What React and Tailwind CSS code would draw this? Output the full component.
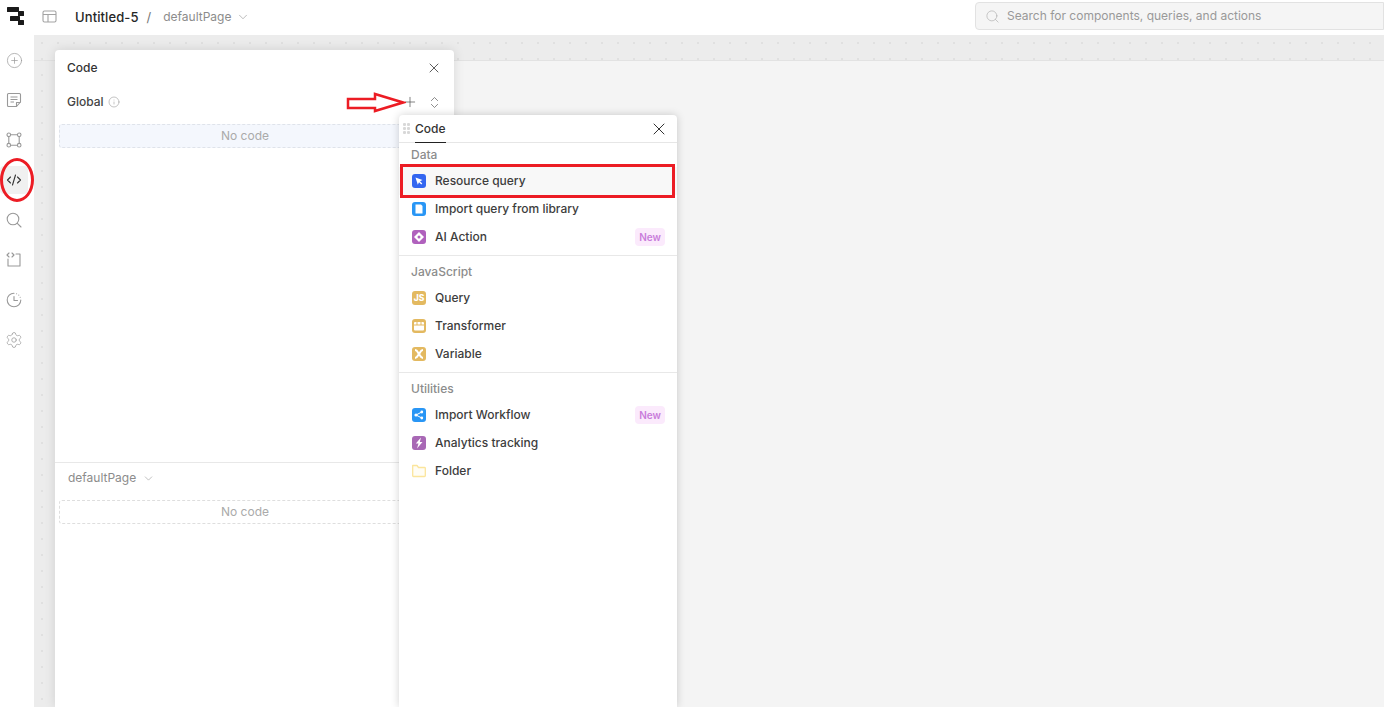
import React from "react";
import { Plus, ChevronDown, ChevronsUpDown, X, Search, Info, CirclePlus, Settings } from "lucide-react";

const Logo = () => (
  <svg width="18" height="19" viewBox="0 0 18 19" fill="#1a1a1a">
    <rect x="0" y="0" width="12" height="5" rx="0.5" />
    <rect x="11" y="4" width="6" height="5" rx="0.5" />
    <rect x="3" y="9" width="10" height="5" rx="0.5" />
    <rect x="11" y="13" width="6" height="5" rx="0.5" />
  </svg>
);

const Rail = ({ active, children }) => (
  <div className={`w-[28px] h-[28px] flex items-center justify-center rounded ${active ? "bg-[#f0f0f0] text-[#333]" : "text-[#999]"}`}>{children}</div>
);

const S = ({ children }) => (
  <svg width="16" height="16" viewBox="0 0 16 16" fill="none" stroke="currentColor" strokeWidth="1.1" strokeLinecap="round" strokeLinejoin="round">{children}</svg>
);

const IconBox = ({ color, children }) => (
  <span className={`w-[14px] h-[14px] rounded-[3px] flex items-center justify-center shrink-0 ${color}`}>
    <svg width="14" height="14" viewBox="0 0 14 14">{children}</svg>
  </span>
);

const Item = ({ icon, label, isNew, hl }) => (
  <div className={`h-[28px] flex items-center pl-[13px] pr-[12px] gap-[9px] ${hl ? "bg-[#f8f8f8]" : ""}`}>
    {icon}
    <span className="text-[12px] leading-[16px] font-medium text-[#3d3d3d] flex-1 whitespace-nowrap">{label}</span>
    {isNew && <span className="h-[18px] w-[30px] rounded-[4px] bg-[#fbeafc] text-[#c97ddb] text-[10px] font-semibold flex items-center justify-center">New</span>}
  </div>
);

const Section = ({ label, children, border, top }) => (
  <div className={`${border ? "border-b border-[#e8e8e8] pb-[4px]" : ""} ${top ? "pt-[4px]" : ""}`}>
    <div className="h-[24px] flex items-center pl-[12px] text-[12px] font-medium text-[#8c8c8c]">{label}</div>
    {children}
  </div>
);

const dots = "bg-[radial-gradient(circle_at_8px_8px,#e0e0e0_1px,transparent_1.2px)] bg-[length:16px_16px]";

export default function App() {
  return (
    <div className="relative w-[1384px] h-[707px] overflow-hidden bg-white font-['Inter',sans-serif] text-[#333]">
      <header className="h-[35px] flex items-start bg-white">
        <div className="ml-[7px] mt-[7px]"><Logo /></div>
        <div className="ml-[17px] mt-[9px] text-[#a3a3a3]">
          <svg width="15" height="15" viewBox="0 0 15 15" fill="none" stroke="currentColor" strokeWidth="1.1"><rect x="1" y="2" width="13" height="11" rx="1.5" /><path d="M1 5.500h13M6 5.500V13" /></svg>
        </div>
        <span className="ml-[18px] mt-[8px] text-[13px] leading-[18px] font-medium tracking-[0.1px] text-[#262626]">Untitled-5</span>
        <span className="ml-[8px] mt-[8px] text-[13px] leading-[18px] text-[#777]">/</span>
        <span className="ml-[12px] mt-[8px] text-[12px] leading-[18px] text-[#8c8c8c]">defaultPage</span>
        <ChevronDown size={14} strokeWidth={1} className="ml-[5px] mt-[10px] text-[#8c8c8c]" />
        <div className="ml-auto mt-[2px] w-[409px] h-[28px] bg-[#f5f5f5] border border-[#e2e2e2] rounded-l-[4px] flex items-center pl-[9px] gap-[8px]">
          <Search size={15} strokeWidth={1} className="text-[#aaa]" />
          <span className="text-[12px] text-[#999] -ml-[1px]">Search for components, queries, and actions</span>
        </div>
      </header>
      <div className="flex h-[672px]">
        <nav className="w-[34px] flex flex-col pt-[11px] gap-[12px] bg-white shrink-0">
          <Rail><CirclePlus size={17} strokeWidth={1} /></Rail>
          <Rail><svg width="16" height="16" viewBox="0 0 16 16" fill="none" stroke="currentColor" strokeWidth="1.1" strokeLinejoin="round"><path d="M1.500 2.500a1 1 0 0 1 1-1h11a1 1 0 0 1 1 1v7.500l-4 4.500H2.500a1 1 0 0 1-1-1z" /><path d="M4.500 5h7M4.500 7.500h7M4.500 10h3.500" /><path d="M10.500 14.500V10.500h4" /></svg></Rail>
          <Rail><S><circle cx="2.800" cy="2.800" r="1.800" /><circle cx="13.200" cy="2.800" r="1.800" /><circle cx="2.800" cy="13.200" r="1.800" /><circle cx="13.200" cy="13.200" r="1.800" /><path d="M4.600 2.800h6.800M4.600 13.200h6.800M2.800 4.600v6.800M13.200 4.600v6.800" /></S></Rail>
          <Rail active><S><path d="M4.500 5 1.500 8l3 3M11.500 5l3 3-3 3M9.500 3l-3 10" /></S></Rail>
          <Rail><svg width="16" height="16" viewBox="0 0 16 16" fill="none" stroke="currentColor" strokeWidth="1.1" strokeLinecap="round"><circle cx="7" cy="7" r="5.800" /><path d="m11.300 11.300 3.700 3.700" /></svg></Rail>
          <Rail><S><path d="M10 2h4v12H2V7" /><path d="M3 1 1 3l2 2M6 1l2 2-2 2" /></S></Rail>
          <Rail><S><path d="M8 1.200a6.800 6.800 0 1 0 6.800 6.800" /><path d="M8 4.500v4h3.500" /><path d="M10.600 1.700v.01M12.800 3.100v.01M14.200 5.200v.01" /></S></Rail>
          <Rail><Settings size={18} strokeWidth={1} /></Rail>
        </nav>
        <main className={`flex-1 flex flex-col bg-[#ececec] ${dots}`}>
          <div className="h-[26px] border-b border-[#e2e2e2] shrink-0" />
          <div className="flex-1 ml-[21px] bg-[#f4f4f4]" />
        </main>
      </div>

      <section className="absolute left-[55px] top-[50px] w-[399px] h-[657px] bg-white rounded-t-[4px] shadow-[0_0_12px_rgba(0,0,0,0.12)] flex flex-col">
        <div className="h-[36px] flex items-center pl-[12px] pr-[12px] justify-between">
          <span className="text-[12px] font-medium text-[#333]">Code</span>
          <X size={16} strokeWidth={1.2} className="text-[#333]" />
        </div>
        <div className="h-[32px] flex items-center pl-[12px] pr-[12px]">
          <span className="text-[12px] font-medium text-[#444]">Global</span>
          <Info size={12} strokeWidth={1} className="ml-[4px] text-[#888]" />
          <Plus size={16} strokeWidth={1.1} className="ml-auto mr-[9px] text-[#555]" />
          <ChevronsUpDown size={15} strokeWidth={1.2} className="text-[#666]" />
        </div>
        <div className="ml-[4px] mr-[23px] mt-[6px] h-[24px] bg-[#f4f7fd] border border-dashed border-[#dfe3ea] rounded-[3px] flex items-center justify-center text-[12px] text-[#aaa]">No code</div>
        <div className="h-[315px] border-b border-[#e8e8e8]" />
        <div className="h-[30px] flex items-center pl-[13px] text-[12px] text-[#8c8c8c]">
          defaultPage <ChevronDown size={13} strokeWidth={1} className="ml-[6px]" />
        </div>
        <div className="ml-[4px] mr-[23px] mt-[7px] h-[24px] border border-dashed border-[#dedede] rounded-[3px] flex items-center justify-center text-[12px] text-[#aaa]">No code</div>
      </section>

      <section className="absolute left-[399px] top-[115px] w-[278px] h-[592px] bg-white rounded-t-[4px] shadow-[0_0_8px_rgba(0,0,0,0.18)] flex flex-col">
        <div className="h-[28px] flex items-center border-b border-[#e6e6e6] pl-[4px] pr-[8px]">
          <svg width="8" height="12" viewBox="0 0 8 12" fill="#d8d8d8"><rect x="0" y="0" width="3" height="3" rx="1" /><rect x="4" y="0" width="3" height="3" rx="1" /><rect x="0" y="4" width="3" height="3" rx="1" /><rect x="4" y="4" width="3" height="3" rx="1" /><rect x="0" y="8" width="3" height="3" rx="1" /><rect x="4" y="8" width="3" height="3" rx="1" /></svg>
          <span className="ml-[4px] h-[28px] pt-[1px] flex items-center border-b border-[#222] text-[12px] font-medium text-[#333] w-[31px]">Code</span>
          <X size={20} strokeWidth={1.2} className="ml-auto text-[#333]" />
        </div>
        <Section label="Data" border>
          <Item hl label="Resource query" icon={<IconBox color="bg-[#3366f0]"><path d="M3.500 3.500l7 2.500-2.500 1.200 2.300 2.300-1 1-2.300-2.300-1.200 2.500z" fill="#fff" /></IconBox>} />
          <Item label="Import query from library" icon={<IconBox color="bg-[#2996f5]"><path d="M3.500 2.500h5.500l1.500 1.500v7.500h-7z" fill="#fff" /></IconBox>} />
          <Item label="AI Action" isNew icon={<IconBox color="bg-[#b061bd]"><path d="M7 2 12 7 7 12 2 7z" fill="#fff" /><circle cx="7" cy="7" r="1.500" fill="#b061bd" /></IconBox>} />
        </Section>
        <Section label="JavaScript" border top>
          <Item label="Query" icon={<IconBox color="bg-[#e3b960]"><text x="7" y="10.200" textAnchor="middle" fontSize="8.500" fontWeight="800" fill="#fff" fontFamily="Inter, sans-serif">JS</text></IconBox>} />
          <Item label="Transformer" icon={<IconBox color="bg-[#e3b960]"><path d="M2 6.500h10v4a1 1 0 0 1-1 1H3a1 1 0 0 1-1-1z" fill="#fff" /><path d="M2 4a1 1 0 0 1 1-1h1.500v2.500H2zM5.500 3h3v2.500h-3zM9.500 3H11a1 1 0 0 1 1 1v1.500H9.500z" fill="#fff" /></IconBox>} />
          <Item label="Variable" icon={<IconBox color="bg-[#e3b960]"><path d="M3 3c2.500 0 3 3 4 4s1.500 4 4 4M11 3c-2.500 0-3 3-4 4s-1.500 4-4 4" stroke="#fff" strokeWidth="2" fill="none" /></IconBox>} />
        </Section>
        <Section label="Utilities" top>
          <Item label="Import Workflow" isNew icon={<IconBox color="bg-[#2996f5]"><circle cx="4" cy="7" r="1.600" fill="#fff" /><circle cx="9.800" cy="4" r="1.400" fill="#fff" /><circle cx="9.800" cy="10" r="1.400" fill="#fff" /><path d="M4 7 9.800 4M4 7l5.800 3" stroke="#fff" /></IconBox>} />
          <Item label="Analytics tracking" icon={<IconBox color="bg-[#a868b5]"><path d="M9 1.500 3.800 7.500h2.700l-1.500 5L10.500 6H7.800z" fill="#fff" /></IconBox>} />
          <Item label="Folder" icon={<span className="w-[14px] h-[14px] shrink-0"><svg width="14" height="14" viewBox="0 0 14 14" fill="#fffdf5" stroke="#fbe59c" strokeWidth="1.300"><path d="M.700 1.500h4.300l1.500 2h6a.8.8 0 0 1 .8.800v7.400a.8.8 0 0 1-.8.800H1.500a.8.8 0 0 1-.8-.8z" strokeLinejoin="round" /></svg></span>} />
        </Section>
      </section>

      {/* annotations */}
      <div className="absolute left-[400px] top-[164px] w-[275px] h-[34px] border-[3px] border-[#ec1c24]" />
      <div className="absolute left-[0px] top-[158px] w-[34px] h-[44px] border-[3px] border-[#ec1c24] rounded-[50%]" />
      <svg className="absolute left-[346px] top-[92px]" width="60" height="24" viewBox="0 0 60 24" fill="none" stroke="#ec1c24" strokeWidth="2.500">
        <path d="M2 7h27V2l28 8.500L29 19v-3H2z" />
      </svg>
    </div>
  );
}
